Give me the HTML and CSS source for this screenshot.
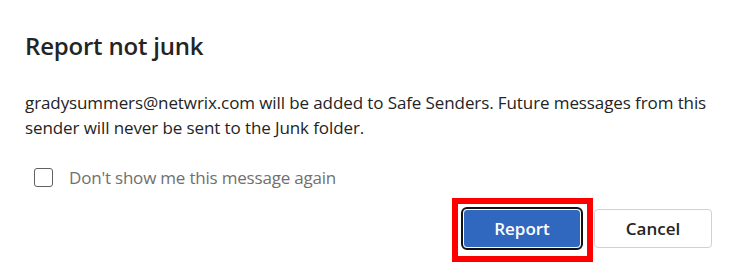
FILE: index.html
```html
<!DOCTYPE html>
<html lang="en">
<head>
<meta charset="utf-8">
<title>Report not junk</title>
<link rel="stylesheet" href="styles.css">
</head>
<body>
<div class="dialog">
  <h1 class="title">Report not junk</h1>
  <p class="message">gradysummers@netwrix.com will be added to Safe Senders. Future messages from this sender will never be sent to the Junk folder.</p>
  <label class="check">
    <span class="box"></span>
    <span class="check-label">Don't show me this message again</span>
  </label>
  <div class="actions">
    <button class="btn btn-primary">Report</button>
    <button class="btn btn-secondary">Cancel</button>
  </div>
</div>
</body>
</html>
```
FILE: styles.css
```css
html, body {
  margin: 0;
  padding: 0;
  background: #ffffff;
}
body {
  font-family: "Open Sans", "Noto Sans", sans-serif;
  color: #242424;
}
.dialog {
  width: 738px;
  height: 273px;
  box-sizing: border-box;
  padding: 28px 26px 0 25px;
}
.title {
  margin: 0;
  font-size: 24px;
  font-weight: 600;
  line-height: 36px;
  letter-spacing: -0.2px;
}
.message {
  margin: 26px 0 0;
  font-size: 17px;
  line-height: 25px;
  letter-spacing: -0.1px;
  width: 700px;
}
.check {
  display: flex;
  align-items: center;
  gap: 16px;
  margin: 27px 0 0 9px;
  height: 20px;
}
.box {
  width: 17px;
  height: 17px;
  border: 1.5px solid #616161;
  border-radius: 3px;
  flex: none;
}
.check-label {
  font-size: 17px;
  color: #707070;
  letter-spacing: -0.2px;
}
.actions {
  display: flex;
  justify-content: flex-end;
  gap: 13px;
  margin-top: 22px;
}
.btn {
  width: 118px;
  height: 39px;
  border-radius: 4px;
  font-family: "Open Sans", "Noto Sans", sans-serif;
  font-size: 17px;
  font-weight: 600;
  padding: 0;
  position: relative;
}
.btn-primary {
  background: #3068bf;
  color: #ffffff;
  border: 1px solid #ffffff;
  outline: 2px solid #111111;
  outline-offset: 0;
}
.btn-primary::after {
  content: "";
  position: absolute;
  left: -12px;
  right: -13px;
  top: -12px;
  bottom: -15px;
  border: 6px solid #ff0000;
}
.btn-secondary {
  background: #ffffff;
  color: #242424;
  border: 1px solid #d1d1d1;
}
```
